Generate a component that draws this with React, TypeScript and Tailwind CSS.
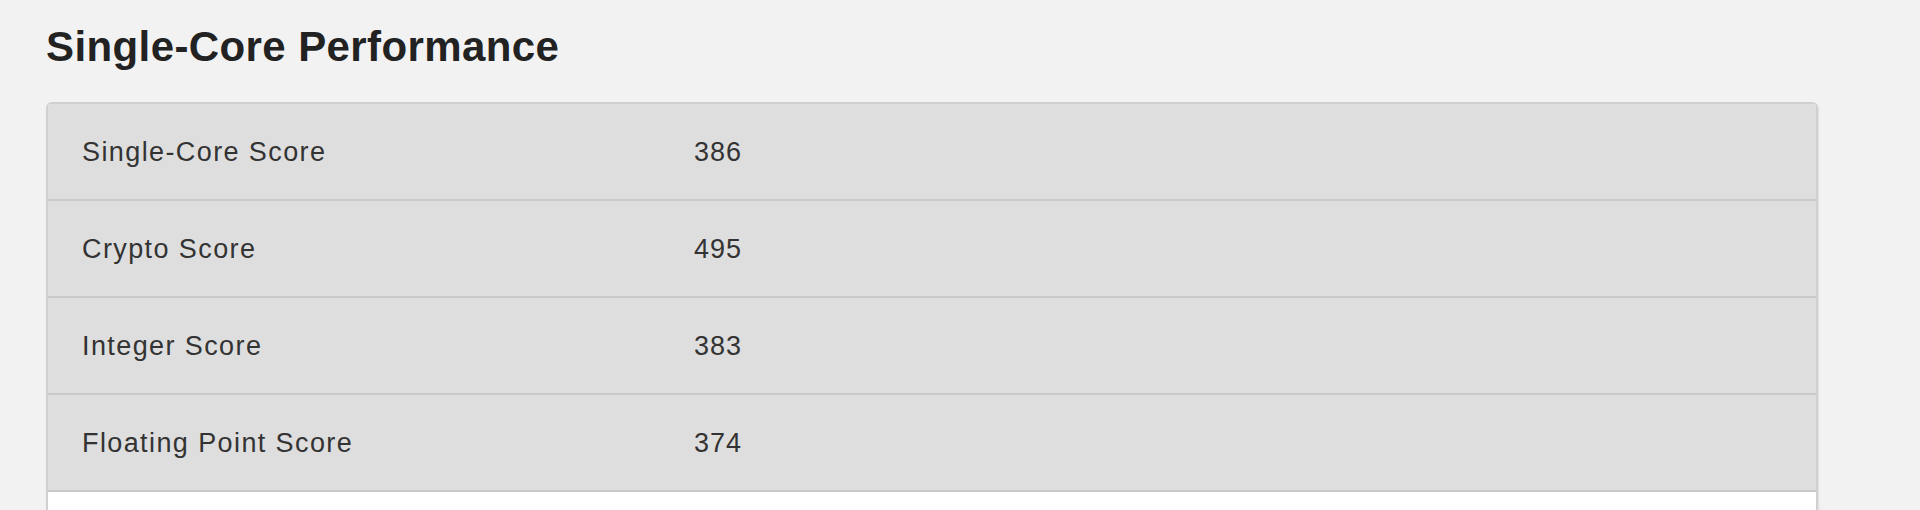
import React from "react";

const rows = [
  { label: "Single-Core Score", value: "386" },
  { label: "Crypto Score", value: "495" },
  { label: "Integer Score", value: "383" },
  { label: "Floating Point Score", value: "374" },
];

export default function App() {
  return (
    <div
      className="w-[1920px] h-[510px] overflow-hidden bg-[#f2f2f2]"
      style={{ fontFamily: '"Liberation Sans", Arial, sans-serif' }}
    >
      <div className="pl-[46px] pr-[100px] pt-[22px]">
        <h2 className="text-[42px] leading-[50px] font-bold text-[#222222] tracking-[0.4px]">
          Single-Core Performance
        </h2>
        <div className="mt-[30px] w-[1772px] border-2 border-[#d0d0d0] rounded-t-[6px] bg-white shadow-[1px_1px_2px_rgba(0,0,0,0.08)] overflow-hidden">
          {rows.map((r) => (
            <div
              key={r.label}
              className="grid grid-cols-[646px_1fr] items-center h-[97px] pt-[2px] bg-[#dedede] border-b-2 border-[#c9c9c9]"
            >
              <div className="pl-[34px] text-[27px] tracking-[1.4px] text-[#333333]">
                {r.label}
              </div>
              <div className="text-[27px] tracking-[1px] text-[#333333]">{r.value}</div>
            </div>
          ))}
          <div className="h-[100px] bg-white" />
        </div>
      </div>
    </div>
  );
}
